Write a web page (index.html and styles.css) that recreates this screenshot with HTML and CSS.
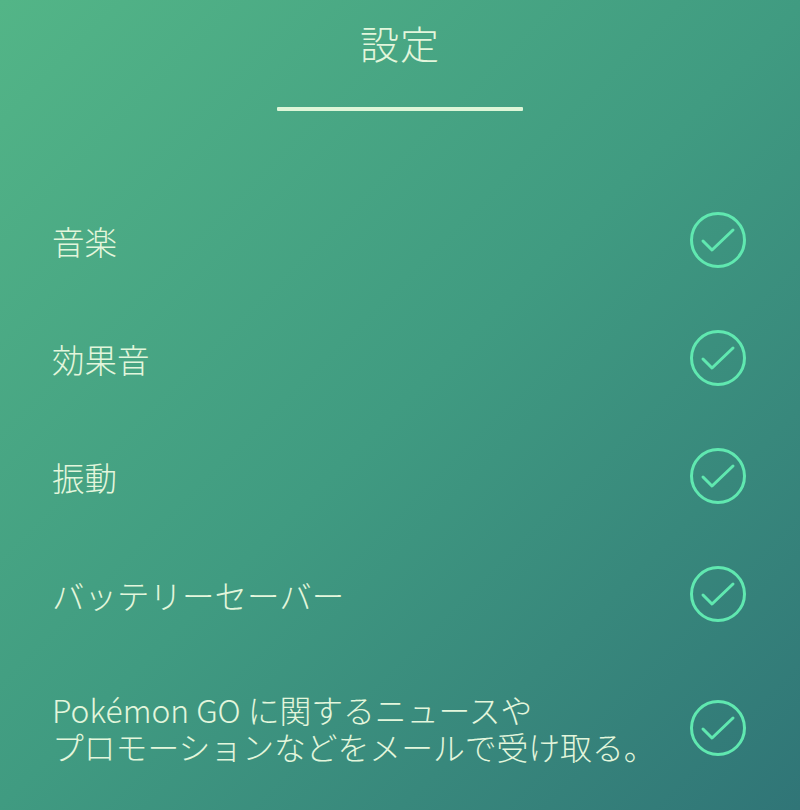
FILE: index.html
```html
<!DOCTYPE html>
<html lang="ja">
<head>
<meta charset="utf-8">
<link rel="stylesheet" href="styles.css">
</head>
<body>
<div class="screen">
  <header class="header">
    <h1 class="title">設定</h1>
    <div class="underline"></div>
  </header>
  <ul class="list">
    <li class="row"><span class="label">音楽</span><svg class="check" viewBox="0 0 56 56"><circle cx="28" cy="28" r="26.5"/><path d="M13 29 L22 38 L43 18"/></svg></li>
    <li class="row"><span class="label">効果音</span><svg class="check" viewBox="0 0 56 56"><circle cx="28" cy="28" r="26.5"/><path d="M13 29 L22 38 L43 18"/></svg></li>
    <li class="row"><span class="label">振動</span><svg class="check" viewBox="0 0 56 56"><circle cx="28" cy="28" r="26.5"/><path d="M13 29 L22 38 L43 18"/></svg></li>
    <li class="row"><span class="label">バッテリーセーバー</span><svg class="check" viewBox="0 0 56 56"><circle cx="28" cy="28" r="26.5"/><path d="M13 29 L22 38 L43 18"/></svg></li>
    <li class="row row-tall"><span class="label label-small">Pokémon GO に関するニュースや<br>プロモーションなどをメールで受け取る。</span><svg class="check" viewBox="0 0 56 56"><circle cx="28" cy="28" r="26.5"/><path d="M13 29 L22 38 L43 18"/></svg></li>
  </ul>
</div>
</body>
</html>
```
FILE: styles.css
```css
html, body {
  margin: 0;
  padding: 0;
}
body {
  width: 800px;
  height: 810px;
  overflow: hidden;
  font-family: "Noto Sans CJK JP", "Noto Sans", sans-serif;
}
.screen {
  width: 800px;
  height: 810px;
  background: linear-gradient(135deg, #53b587 0%, #409b81 50%, #307577 100%);
  color: #e3f6dc;
}
.header {
  display: flex;
  flex-direction: column;
  align-items: center;
  padding-top: 19px;
}
.title {
  margin: 0;
  font-size: 39px;
  line-height: 46px;
  font-weight: 300;
  letter-spacing: 1px;
}
.underline {
  margin-top: 42px;
  width: 246px;
  height: 4px;
  background: #def6d8;
  border-radius: 1px;
}
.list {
  list-style: none;
  margin: 70px 0 0;
  padding: 0;
}
.row {
  display: flex;
  align-items: center;
  justify-content: space-between;
  box-sizing: border-box;
  min-height: 118px;
  padding: 0 54px 0 52px;
}
.row-tall {
  padding-top: 38px;
  padding-bottom: 38px;
}
.label {
  font-size: 32.5px;
  line-height: 37px;
  font-weight: 300;
  white-space: nowrap;
}
.label-small {
  font-size: 31.8px;
}
.check {
  width: 56px;
  height: 56px;
  flex: none;
  fill: none;
  stroke: #60e8b0;
  stroke-width: 3px;
  stroke-linecap: round;
  stroke-linejoin: round;
}
```
